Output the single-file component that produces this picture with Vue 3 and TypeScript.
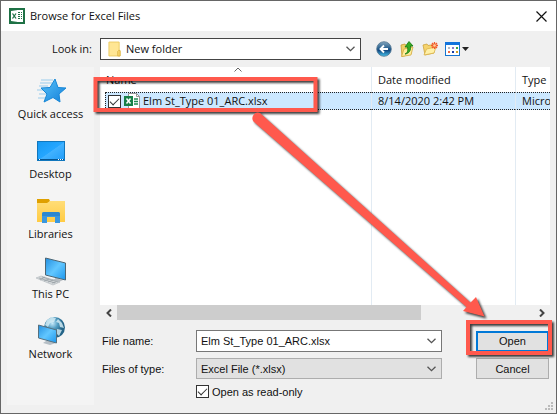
<script setup lang="ts">
import { ref } from 'vue'

interface Place { id: string; label: string }
interface FileRow { name: string; modified: string; type: string; checked: boolean }

const places: Place[] = [
  { id: 'quick', label: 'Quick access' },
  { id: 'desktop', label: 'Desktop' },
  { id: 'libraries', label: 'Libraries' },
  { id: 'pc', label: 'This PC' },
  { id: 'network', label: 'Network' },
]
const files = ref<FileRow[]>([
  { name: 'Elm St_Type 01_ARC.xlsx', modified: '8/14/2020 2:42 PM', type: 'Micro', checked: true },
])
const fileName = ref('Elm St_Type 01_ARC.xlsx')
const readOnly = ref(true)
</script>

<template>
  <main class="dialog">
    <header class="titlebar">
      <svg class="app-icon" viewBox="0 0 16 16" aria-hidden="true">
        <rect width="16" height="16" fill="#1e7145" />
        <rect x="8" y="2" width="6" height="12" fill="#fff" />
        <path d="M9 4h2v1H9zM12 4h1v1h-1zM9 6h2v1H9zM12 6h1v1h-1zM9 8h2v1H9zM12 8h1v1h-1zM9 10h2v1H9zM12 10h1v1h-1z" fill="#1e7145" />
        <path d="M2 3l7-1v12l-7-1z" fill="#fff" />
        <path d="M3.500 5.500l3.500 5M7 5.500l-3.500 5" stroke="#1e7145" stroke-width="1.300" />
      </svg>
      <h1>Browse for Excel Files</h1>
      <button class="close" type="button" aria-label="Close">
        <svg viewBox="0 0 11 11"><path d="M.5.5l10 10M10.500.5l-10 10" stroke="#111" stroke-width="1.200" /></svg>
      </button>
    </header>

    <form class="body" @submit.prevent>
      <label class="look-label" for="look-in">Look in:</label>
      <div class="look-row">
        <div class="combo look">
          <svg class="folder" viewBox="0 0 14 16" aria-hidden="true">
            <path d="M1 .5h11v9l1 1v5H1z" fill="#ffe694" stroke="#ecca62" />
            <path d="M10.500 15.500v-5l1-1h1.500v6z" fill="#fbd96d" stroke="#dfb64a" />
          </svg>
          <select id="look-in"><option>New folder</option></select>
          <svg class="chevron" viewBox="0 0 9 6"><path d="M.5.7l4 4 4-4" /></svg>
        </div>
        <div class="tools">
          <button type="button" aria-label="Back">
            <svg width="16" height="16" viewBox="0 0 16 16">
              <defs><linearGradient id="ball" x2="0" y2="1"><stop stop-color="#85a6bd" /><stop offset=".45" stop-color="#28608f" /><stop offset=".6" stop-color="#134a83" /><stop offset="1" stop-color="#45c4ee" /></linearGradient></defs>
              <circle cx="8" cy="8" r="7.300" fill="url(#ball)" stroke="#50738f" stroke-width=".8" />
              <path d="M12 8H5M8 4.500L4.500 8 8 11.500" fill="none" stroke="#fff" stroke-width="1.900" />
            </svg>
          </button>
          <button type="button" aria-label="Up one level">
            <svg width="16" height="16" viewBox="0 0 16 16">
              <path d="M2 4l4-1 1 1.500 5-1V13l-9 2.500z" fill="#f0cf67" stroke="#c59a32" stroke-width=".8" />
              <path d="M2.500 15.500L5 8l9-2-2 8z" fill="#ffec9d" stroke="#d3ac42" stroke-width=".8" />
              <path d="M6 13c3-1 3-4 2.500-7H6l4-5.500L14 5h-2.500c.5 4-1 7.500-5.500 8z" fill="#35ad25" stroke="#15770f" stroke-width=".8" />
            </svg>
          </button>
          <button type="button" aria-label="Create new folder">
            <svg width="16" height="16" viewBox="0 0 16 16">
              <path d="M1 4l4-1 1 1.500 6-1V12l-9 2z" fill="#f5d36d" stroke="#cda43e" stroke-width=".8" />
              <path d="M2 14L4.500 8l9.500-2-2 6z" fill="#fff0a8" stroke="#dab44c" stroke-width=".8" />
              <path d="M12.500 1v7M9 4.500h7M10 2l5 5M15 2l-5 5" stroke="#f25a2b" stroke-width="1.300" />
              <circle cx="12.500" cy="4.500" r="1.300" fill="#ffd39b" />
            </svg>
          </button>
          <button class="view" type="button" aria-label="View menu">
            <svg width="25" height="16" viewBox="0 0 25 16">
              <rect x=".5" y="1.500" width="14" height="13" fill="#fff" stroke="#1675d1" />
              <path d="M0 1h15v3H0z" fill="#1374dc" />
              <path d="M3 6h2v2H3z" fill="#b5b7c0" /><path d="M7 6h2v2H7z" fill="#8c7bcb" /><path d="M11 6h2v2h-2z" fill="#40a445" />
              <path d="M3 10h2v2H3z" fill="#ee6b45" /><path d="M7 10h2v2H7z" fill="#183da5" /><path d="M11 10h2v2h-2z" fill="#d1a127" />
              <path d="M17 6h7l-3.500 4z" fill="#222" />
            </svg>
          </button>
        </div>
      </div>

      <nav class="places" aria-label="Places">
        <a v-for="p in places" :key="p.id" href="#">
          <svg v-if="p.id === 'quick'" viewBox="0 0 32 32">
            <defs><linearGradient id="star" x2="1" y2="1"><stop stop-color="#59c4fa" /><stop offset="1" stop-color="#137ed9" /></linearGradient></defs>
            <path d="M6 6h12M5 9h12M4 12h9M2 16h9M4 20h9M3 24h7" stroke="#9bcdec" />
            <path d="M20 5l3 8.500 8 .500-7 6 1 8-7-4.500L9 28l3-8-6-6 9-.5z" fill="url(#star)" stroke="#1687d7" />
          </svg>
          <svg v-else-if="p.id === 'desktop'" viewBox="0 0 32 32">
            <defs><linearGradient id="desk" x2="1" y2="1"><stop stop-color="#1599f2" /><stop offset=".5" stop-color="#25a6ff" /><stop offset=".52" stop-color="#42b2ff" /><stop offset="1" stop-color="#209dfa" /></linearGradient></defs>
            <rect x="2.500" y="7.500" width="27" height="19" fill="url(#desk)" stroke="#1177bd" />
            <path d="M3 25.500h26" stroke="#075591" /><path d="M4 25.500h1M23 25.500h1M25 25.500h1M27 25.500h1" stroke="#fff" />
          </svg>
          <svg v-else-if="p.id === 'libraries'" viewBox="0 0 32 32">
            <defs><linearGradient id="lib" x2="0" y2="1"><stop stop-color="#ffdd77" /><stop offset="1" stop-color="#ffcb43" /></linearGradient></defs>
            <path d="M2 5h12l1 2-2 3H2z" fill="#dfa000" />
            <path d="M2 9h10l3-2h15v21H2z" fill="url(#lib)" />
            <path d="M7 29V20q0-2 2-2h14q2 0 2 2v9h-5v-6h-8v6z" fill="#3997df" />
            <path d="M7 22v-2q0-2 2-2h14q2 0 2 2v2z" fill="#2a87d0" />
          </svg>
          <svg v-else-if="p.id === 'pc'" viewBox="0 0 32 32">
            <defs><linearGradient id="scr" x2="1" y2="1"><stop stop-color="#238fe0" /><stop offset=".5" stop-color="#62c7ff" /><stop offset="1" stop-color="#1b96ed" /></linearGradient></defs>
            <path d="M20 21l4 1v3l4 1-4 2-8-2 4-1z" fill="#b7bdc2" />
            <path d="M10.500 4l20 5v17l-20-5z" fill="url(#scr)" stroke="#4d6674" />
            <path d="M1 24l5-2 19 6-7 3z" fill="#d4d8da" stroke="#aeb5ba" stroke-width=".6" />
            <path d="M4 24l16 5M7 23l16 5M5 26l5-3M9 27l5-2M13 28l5-2M17 29l4-1" stroke="#939ca2" stroke-width=".7" />
          </svg>
          <svg v-else viewBox="0 0 32 32">
            <defs><radialGradient id="globe" cx=".4" cy=".3"><stop stop-color="#c8eafa" /><stop offset=".5" stop-color="#549fc4" /><stop offset="1" stop-color="#246488" /></radialGradient></defs>
            <circle cx="19.500" cy="13.500" r="10.500" fill="url(#globe)" />
            <path d="M12 6l5-3 4 1-2 4-4 1-2 4-3-2zM23 5l4 4 2 5-4-1-1-4-3-1zM22 15l5 1-3 6-2-2z" fill="#d8eff6" opacity=".8" />
            <path d="M11 27l4-1v-4l4 1v4l2 2-6 2-7-2z" fill="#b5bec5" />
            <path d="M3.500 11l18 5v13l-18-5z" fill="url(#scr)" stroke="#55707f" />
          </svg>
          <span>{{ p.label }}</span>
        </a>
      </nav>

      <section class="list" aria-label="Files">
        <div class="sheet">
          <table>
            <colgroup><col><col class="date-col"><col class="type-col"></colgroup>
            <thead>
              <tr>
                <th>Name<svg class="sort" viewBox="0 0 8 5"><path d="M.5 4.500L4 1l3.500 3.500" /></svg></th>
                <th>Date modified</th>
                <th>Type</th>
              </tr>
            </thead>
            <tbody>
              <tr v-for="f in files" :key="f.name" class="selected">
                <td>
                  <label class="file">
                    <input v-model="f.checked" class="tick" type="checkbox">
                    <svg viewBox="0 0 16 16" width="16" height="16" aria-hidden="true">
                      <path d="M4.500.5h8l3 3v12h-11z" fill="#fff" stroke="#999" /><path d="M12.500.5v3h3" fill="none" stroke="#999" />
                      <path d="M10 6h4M10 8.500h4M10 11h4" stroke="#1f8a50" stroke-width="1.300" />
                      <path d="M0 3h9v10H0z" fill="#178047" /><path d="M2.500 5.500l4 5M6.500 5.500l-4 5" stroke="#fff" stroke-width="1.500" />
                    </svg>
                    <span>{{ f.name }}</span>
                  </label>
                </td>
                <td>{{ f.modified }}</td>
                <td>{{ f.type }}</td>
              </tr>
              <tr class="filler" aria-hidden="true"><td /><td /><td /></tr>
            </tbody>
          </table>
        </div>
        <div class="scrollbar">
          <button type="button" aria-label="Scroll left"><svg viewBox="0 0 6 8"><path d="M5 .5L1.500 4 5 7.500" /></svg></button>
          <div class="track"><div class="thumb" /></div>
          <button type="button" aria-label="Scroll right"><svg viewBox="0 0 6 8"><path d="M1 .5L4.500 4 1 7.500" /></svg></button>
        </div>
      </section>

      <div class="fields">
        <label for="file-name">File name:</label>
        <div class="combo name-box">
          <input id="file-name" v-model="fileName" type="text">
          <svg class="chevron" viewBox="0 0 9 6"><path d="M.5.7l4 4 4-4" /></svg>
        </div>
        <button class="push primary" type="submit">Open</button>
        <label for="file-type">Files of type:</label>
        <div class="combo type-box">
          <select id="file-type"><option>Excel File (*.xlsx)</option></select>
          <svg class="chevron" viewBox="0 0 9 6"><path d="M.5.7l4 4 4-4" /></svg>
        </div>
        <button class="push" type="button">Cancel</button>
        <label class="readonly"><input v-model="readOnly" class="tick" type="checkbox">Open as read-only</label>
      </div>
    </form>

    <svg class="grip" viewBox="0 0 8 8" aria-hidden="true"><path d="M6 0h2v2H6zM3 3h2v2H3zM6 3h2v2H6zM0 6h2v2H0zM3 6h2v2H3zM6 6h2v2H6z" fill="#bbb" /></svg>

    <svg class="callout" width="557" height="414" viewBox="0 0 557 414" aria-hidden="true">
      <g class="marks">
        <rect x="95.500" y="79" width="220" height="31" />
        <rect x="468" y="322" width="82" height="31" />
        <path class="arrow" d="M260 113L470.500 302.500 476 297 484.500 316.500 463 311 466.500 307 253.500 121.500A5.600 5.600 0 0 1 260 113z" />
      </g>
    </svg>
  </main>
</template>

<style>
body { margin: 0; }
</style>

<style scoped>
* { box-sizing: border-box; }
.dialog {
  position: relative;
  display: flex;
  flex-direction: column;
  min-height: 100vh;
  border: 1px solid #666;
  background: #f0f0f0;
  color: #111;
  font: 11px/16px "Open Sans", "Noto Sans", sans-serif;
}
svg { display: block; flex: none; }
button { padding: 0; border: 0; background: none; color: inherit; font: inherit; }
select, input[type="text"] {
  flex: 1;
  min-width: 0;
  padding: 0;
  border: 0;
  outline: 0;
  background: none;
  color: inherit;
  font: inherit;
  appearance: none;
}
.titlebar { display: flex; align-items: center; height: 30px; padding: 0 9px 0 8px; background: #fff; }
.app-icon { width: 16px; height: 16px; }
h1 { flex: 1; margin: 0 0 0 5px; font: inherit; }
.close svg { width: 11px; height: 11px; }
.body {
  flex: 1;
  display: grid;
  grid-template-columns: 87px minmax(0, 1fr);
  grid-template-rows: 22px 1fr auto;
  column-gap: 6px;
  padding: 7px 6px 8px;
}
.look-label { align-self: center; padding-right: 2px; text-align: right; }
.look-row { display: flex; }
.combo { display: flex; align-items: center; padding: 0 5px 0 4px; border: 1px solid #777; background: #fff; }
.look { flex: 1; padding-left: 7px; border-color: #444; }
.folder { width: 13px; height: 16px; margin-right: 5px; }
.chevron { width: 9px; height: 6px; fill: none; stroke: #555; stroke-width: 1.3; }
.tools { display: flex; align-items: center; gap: 7px; width: 189px; padding-left: 15px; }
.places { grid-row: 2 / 4; margin-top: 7px; padding-top: 7px; background: #f4f4f4; }
.places a { display: flex; flex-direction: column; align-items: center; height: 60px; color: inherit; text-decoration: none; }
.places svg { width: 32px; height: 32px; }
.list { display: grid; grid-template-rows: 1fr 15px; margin-top: 7px; overflow: hidden; background: #fff; }
.sheet { display: grid; padding-left: 5px; }
table { width: 100%; height: 100%; table-layout: fixed; border-collapse: separate; border-spacing: 0; }
.date-col { width: 144px; }
.type-col { width: 35px; }
th, td { padding: 0 0 0 6px; overflow: hidden; font-weight: 400; text-align: left; white-space: nowrap; }
th { position: relative; height: 25px; }
th:first-child { padding-left: 1px; }
th + th, td + td { border-left: 1px solid #e2ebf3; }
.sort { position: absolute; top: 0; left: calc(50% - 4px); width: 8px; height: 5px; fill: none; stroke: #666; }
.selected td { height: 17px; border-top: 1px dotted #222; border-bottom: 1px dotted #222; background: #cce8ff; }
.selected td:first-child { padding-left: 2px; border-left: 1px dotted #222; }
.filler { height: 100%; }
.file { display: flex; align-items: center; gap: 3px; height: 15px; }
.tick {
  flex: none;
  width: 13px;
  height: 13px;
  margin: 0;
  border: 1px solid #333;
  background: #fff;
  appearance: none;
}
.tick:checked::before {
  content: "";
  display: block;
  width: 8px;
  height: 4px;
  margin: 2px 0 0 1px;
  border: solid #333;
  border-width: 0 0 1px 1px;
  transform: rotate(-45deg);
}
.scrollbar { display: flex; background: #f0f0f0; }
.scrollbar button { display: grid; place-items: center; width: 17px; }
.scrollbar svg { width: 6px; height: 8px; fill: none; stroke: #444; stroke-width: 2; }
.track { flex: 1; }
.thumb { width: 73%; height: 100%; background: #cdcdcd; }
.fields {
  display: grid;
  grid-template-columns: 96px minmax(0, 1fr) 73px;
  grid-template-rows: 22px 21px 13px;
  row-gap: 6px;
  align-items: center;
  margin-top: 10px;
  padding: 0 1px 7px 0;
  font-family: "Liberation Sans", Arial, sans-serif;
}
.fields > label:not(.readonly) { padding-left: 2px; }
.name-box, .type-box { height: 100%; margin-right: 34px; }
.type-box { border-color: #adadad; background: #e1e1e1; }
.push { height: 21px; border: 1px solid #adadad; background: #e1e1e1; }
.primary { border: 2px solid #0078d7; }
.readonly { grid-column: 2; display: flex; align-items: center; gap: 3px; }
.grip { position: absolute; right: 3px; bottom: 3px; width: 8px; height: 8px; }
.callout { position: absolute; top: -1px; left: -1px; pointer-events: none; }
.marks { fill: none; stroke: #ff594d; stroke-width: 4; filter: drop-shadow(2px 2px 1px rgb(0 0 0 / 75%)); }
.arrow { fill: #ff594d; stroke: none; }
</style>
